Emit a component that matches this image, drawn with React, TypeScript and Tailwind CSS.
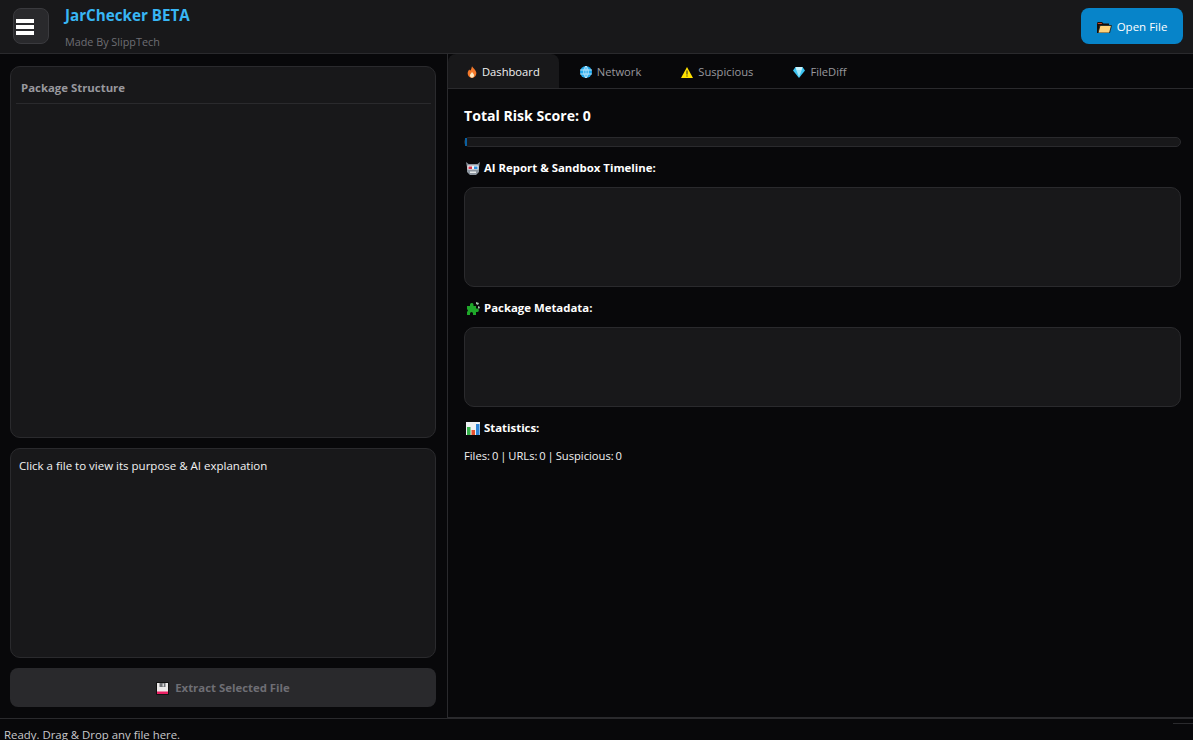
const font = { fontFamily: '"Open Sans", "Noto Sans", sans-serif' };

function Fire() {
  return (
    <svg width="10" height="14" viewBox="0 0 12 14">
      <path d="M6 0c1 2 4 4 5 7 1 4-2 7-5 7S0 11 1 7c.4-1.500 1.300-2 1.800-3 .4 1 .8 1.300 1.200 1.300C5 4 5.500 2 6 0z" fill="#f4792b" />
      <path d="M6 7c1 1.500 2.500 2.500 2.500 4S7.300 14 6 14 3.500 12.500 3.500 11 5.500 8.500 6 7z" fill="#fde7c0" />
    </svg>
  );
}

function Globe() {
  return (
    <svg width="12" height="12" viewBox="0 0 12 12">
      <circle cx="6" cy="6" r="6" fill="#1fa8ee" />
      <path d="M0 4h12M0 8h12M6 0v12M6 0C3 3 3 9 6 12M6 0c3 3 3 9 0 12" stroke="#d6f1ff" strokeWidth="0.8" fill="none" />
    </svg>
  );
}

function Warning() {
  return (
    <svg width="12" height="11" viewBox="0 0 12 11">
      <path d="M6 0l6 11H0z" fill="#ffe100" />
      <path d="M5.500 3.500h1v4h-1zM5.500 8.500h1v1h-1z" fill="#222" />
    </svg>
  );
}

function Gem() {
  return (
    <svg width="12" height="12" viewBox="0 0 12 12">
      <path d="M2.500 1h7L12 4.500 6 12 0 4.500z" fill="#3cc4f2" />
      <path d="M3.500 4.500h5L6 11z" fill="#9fe8fb" />
      <path d="M2.500 1h7L8.500 4.500h-5z" fill="#c9f3fd" />
    </svg>
  );
}

function Robot() {
  return (
    <svg width="14" height="13" viewBox="0 0 14 13">
      <path d="M0 0l2.500 2h9L14 0l-1 5v5l-3 3H4l-3-3V5z" fill="#8d96a0" />
      <rect x="1.500" y="3.500" width="11" height="4" fill="#f2f4f6" />
      <rect x="2.500" y="4.500" width="3.500" height="2.500" fill="#d8344c" />
      <rect x="8" y="4.500" width="3.500" height="2.500" fill="#2b8fe0" />
      <rect x="4" y="9.500" width="6" height="1.500" fill="#e8eaec" />
    </svg>
  );
}

function Puzzle() {
  return (
    <svg width="14" height="13" viewBox="0 0 14 13">
      <path d="M1 4h3V2.500a1.800 1.800 0 0 1 3.500 0V4H10v2.500h1.500a1.800 1.800 0 0 1 0 3.500H10v3H7V11.500a1.500 1.500 0 0 0-3 0V13H1V10l1-1.500L1 7z" fill="#1fa82a" />
      <path d="M10 0l3 1-1 2-2-1zM12 4l2 1-1 2-1-1z" fill="#a9c7b0" />
    </svg>
  );
}

function Chart() {
  return (
    <svg width="14" height="13" viewBox="0 0 14 13">
      <rect width="14" height="13" fill="#eef1f4" />
      <rect x="1" y="5" width="3.500" height="8" fill="#35b04a" />
      <rect x="5.500" y="8" width="3.500" height="5" fill="#e5512f" />
      <rect x="10" y="2" width="3.500" height="11" fill="#2f86d8" />
    </svg>
  );
}

function Folder() {
  return (
    <svg width="15" height="11" viewBox="0 0 15 11">
      <path d="M0 1.500C0 .7.600 0 1.200 0H5l1.500 1.500H12V3H3L1 11H0z" fill="#1a0d05" />
      <path d="M.5 2h4l.8-1H1z" fill="#c9452b" />
      <path d="M3 3.500h11.500L12.500 11H1z" fill="#fdd27a" stroke="#111" strokeWidth="0.8" />
    </svg>
  );
}

function Floppy() {
  return (
    <svg width="13" height="13" viewBox="0 0 13 13">
      <rect width="13" height="13" rx="1" fill="#111" />
      <rect x="1" y="1" width="11" height="11" fill="#eceaea" />
      <rect x="3.500" y="1" width="6" height="4" fill="#6f7175" />
      <rect x="6.500" y="1.500" width="1.500" height="3" fill="#d8d8d8" />
      <rect x="1" y="9.500" width="11" height="2.500" fill="#ea1f63" />
    </svg>
  );
}

const tabs = [
  { label: "Network", icon: <Globe /> },
  { label: "Suspicious", icon: <Warning /> },
  { label: "FileDiff", icon: <Gem /> },
];

export default function App() {
  return (
    <div className="flex h-screen flex-col overflow-hidden bg-[#08080a] text-[11.400px] text-[#f2f2f2]" style={font}>
      <header className="flex h-[54px] shrink-0 items-start justify-between border-b border-[#2a2a2d] bg-[#18181a] pl-[13px] pr-[10px] pt-2">
        <div className="flex">
          <button className="flex h-9 w-9 flex-col items-start justify-center gap-[2px] rounded-lg border border-[#3a3a3e] bg-[#29292c] pl-[2px] pt-[2px]">
            <span className="h-[4px] w-[18px] bg-white" />
            <span className="h-[4px] w-[18px] bg-white" />
            <span className="h-[4px] w-[18px] bg-white" />
          </button>
          <div className="ml-4 flex flex-col">
            <span className="text-[15.200px] leading-[14px] font-bold text-[#38b6f5]">JarChecker BETA</span>
            <span className="mt-[13px] text-[10.800px] leading-[14px] text-[#6e6e74]">Made By SlippTech</span>
          </div>
        </div>
        <button className="flex h-9 w-[102px] items-center justify-center gap-[5px] rounded-lg bg-[#0784c9] pt-[2px] text-[11.500px] text-white">
          <Folder />
          Open File
        </button>
      </header>

      <div className="flex min-h-0 flex-1">
        <aside className="flex w-[448px] shrink-0 flex-col gap-[10px] border-r border-[#2a2a2d] pb-[11px] pl-[10px] pr-[11px] pt-3">
          <section className="h-[372px] rounded-[10px] border border-[#2a2a2d] bg-[#18181a] pl-[5px] pr-[4px]">
            <div className="border-b border-[#2a2a2d] px-[5px] pb-[7px] pt-[13px] font-bold leading-4 text-[#98989e]">Package Structure</div>
          </section>
          <section className="flex-1 rounded-[10px] border border-[#2a2a2d] bg-[#18181a] px-2 py-[9px] text-[11.500px] leading-4">
            Click a file to view its purpose &amp; AI explanation
          </section>
          <button className="flex h-[39px] shrink-0 items-center justify-center gap-[6px] rounded-lg bg-[#29292c] pt-[1px] font-bold text-[#6e6e74]">
            <Floppy />
            Extract Selected File
          </button>
        </aside>

        <main className="flex min-w-0 flex-1 flex-col border-b border-[#2a2a2d]">
          <nav className="flex h-[35px] shrink-0 gap-[3px] border-b border-[#2a2a2d] text-[11.200px]">
            <div className="flex items-center gap-[4px] rounded-t-lg bg-[#18181a] pl-[18px] pr-[19px] pt-[2px]">
              <span className="flex w-3 justify-center"><Fire /></span>
              Dashboard
            </div>
            {tabs.map((t) => (
              <div key={t.label} className="flex items-center gap-[5px] pl-[18px] pr-[19px] pt-[2px] text-[#98989e]">
                {t.icon}
                {t.label}
              </div>
            ))}
          </nav>
          <div className="flex flex-col pl-4 pr-3 pt-[17px]">
            <h1 className="text-[14.100px] leading-5 font-bold text-white">Total Risk Score: 0</h1>
            <div className="mt-[11px] h-[10px] rounded-full border border-[#2a2a2d] bg-[#18181a]">
              <div className="h-full w-[2px] bg-[#0a5fa0]" />
            </div>
            <Heading icon={<Robot />} text="AI Report & Sandbox Timeline:" className="mt-[13px]" />
            <div className="mt-[11px] h-[100px] rounded-[10px] border border-[#2a2a2d] bg-[#18181a]" />
            <Heading icon={<Puzzle />} text="Package Metadata:" className="mt-[13px]" />
            <div className="mt-[11px] h-[80px] rounded-[10px] border border-[#2a2a2d] bg-[#18181a]" />
            <Heading icon={<Chart />} text="Statistics:" className="mt-[13px]" />
            <p className="mt-3 text-[11.200px] leading-4 [word-spacing:-1px]">Files: 0 | URLs: 0 | Suspicious: 0</p>
          </div>
        </main>
      </div>

      <footer className="relative h-[22px] shrink-0 border-t border-[#2a2a2d] pl-1 pt-[8px] leading-4 text-[#c8c8cc]">
        Ready. Drag &amp; Drop any file here.
        <span className="absolute right-0 top-[4px] h-px w-5 bg-[#2a2a2d]" />
      </footer>
    </div>
  );
}

function Heading({ icon, text, className }: { icon: React.ReactNode; text: string; className: string }) {
  return (
    <div className={`flex h-4 items-center gap-[4px] pl-[2px] font-bold leading-4 text-white ${className}`}>
      {icon}
      {text}
    </div>
  );
}
